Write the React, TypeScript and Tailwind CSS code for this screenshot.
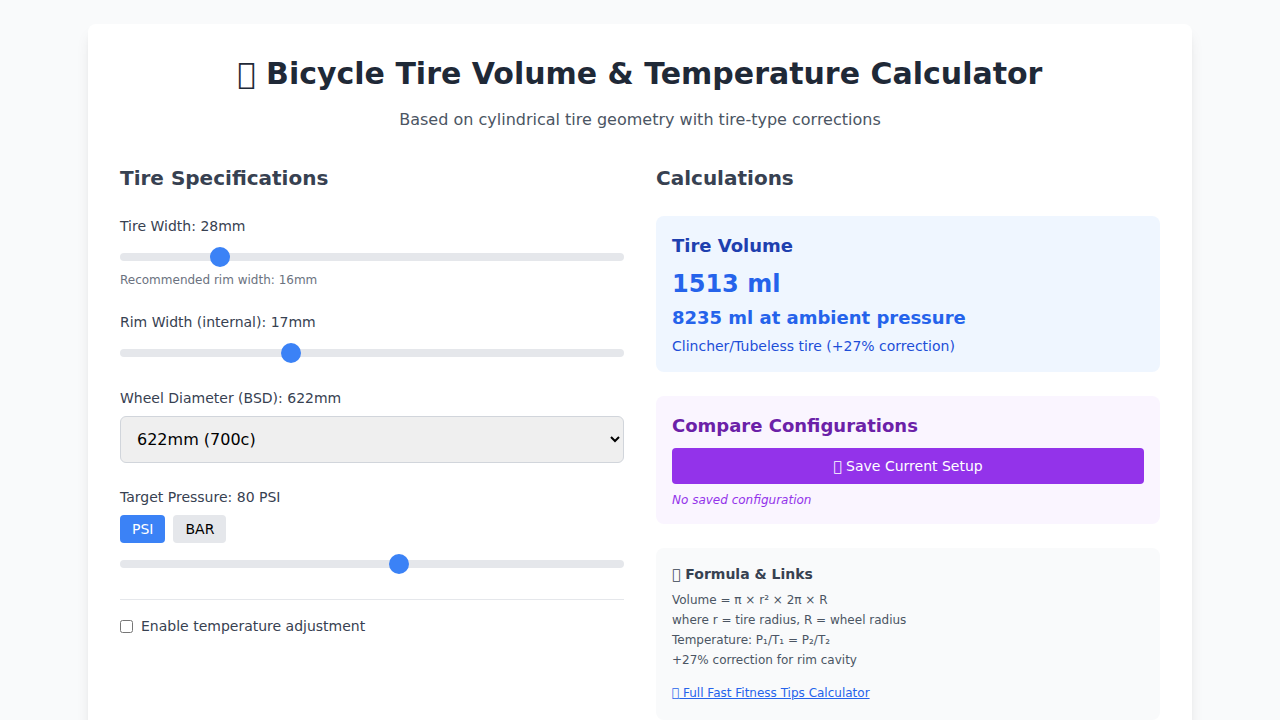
import { useState } from "react";

const sliderClass =
  "h-2 w-full cursor-pointer appearance-none rounded-lg bg-[#e5e7eb] [&::-webkit-slider-thumb]:h-5 [&::-webkit-slider-thumb]:w-5 [&::-webkit-slider-thumb]:appearance-none [&::-webkit-slider-thumb]:rounded-full [&::-webkit-slider-thumb]:bg-[#3b82f6]";

function Slider({ value, min, max, onChange }: { value: number; min: number; max: number; onChange: (v: number) => void }) {
  return (
    <div className="h-6">
      <input type="range" className={sliderClass} min={min} max={max} value={value} onChange={(e) => onChange(Number(e.target.value))} />
    </div>
  );
}

const labelClass = "block text-sm font-medium text-[#374151] mb-2";
const glyph = "\u{F0000}";

export default function App() {
  const [width, setWidth] = useState(28);
  const [rim, setRim] = useState(17);
  const [bsd, setBsd] = useState("622");
  const [unit, setUnit] = useState("PSI");
  const [pressure, setPressure] = useState(80);
  const [temp, setTemp] = useState(false);
  const active = "bg-[#3b82f6] text-white";
  const idle = "bg-[#e5e7eb] text-black";

  return (
    <div className="h-[720px] overflow-hidden bg-[#f9fafb] font-['DejaVu_Sans',sans-serif]">
      <div className="mx-auto mt-6 h-[800px] w-[1104px] rounded-lg bg-white p-8 shadow-lg">
        <h1 className="mb-4 text-center text-3xl leading-9 font-bold text-[#1f2937]">{glyph} Bicycle Tire Volume &amp; Temperature Calculator</h1>
        <p className="mb-8 text-center text-[#4b5563]">Based on cylindrical tire geometry with tire-type corrections</p>
        <div className="grid grid-cols-2 gap-8">
          <section className="space-y-6">
            <h2 className="text-xl font-semibold text-[#374151]">Tire Specifications</h2>
            <div>
              <label className={labelClass}>Tire Width: {width}mm</label>
              <Slider value={width} min={18} max={72} onChange={setWidth} />
              <p className="mt-1 text-xs text-[#6b7280]">Recommended rim width: 16mm</p>
            </div>
            <div>
              <label className={labelClass}>Rim Width (internal): {rim}mm</label>
              <Slider value={rim} min={10} max={31} onChange={setRim} />
            </div>
            <div>
              <label className={labelClass}>Wheel Diameter (BSD): {bsd}mm</label>
              <select value={bsd} onChange={(e) => setBsd(e.target.value)} className="h-[47px] w-full rounded-md border border-[#d1d5db] bg-[#efefef] p-3 text-base text-black">
                <option value="622">622mm (700c)</option>
                <option value="584">584mm (650b)</option>
                <option value="559">559mm (26")</option>
              </select>
            </div>
            <div>
              <label className={labelClass}>Target Pressure: {pressure} {unit}</label>
              <div className="mb-2 flex gap-2">
                {["PSI", "BAR"].map((u) => (
                  <button key={u} onClick={() => setUnit(u)} className={`rounded-sm px-3 py-1 text-sm ${u === unit ? active : idle}`}>{u}</button>
                ))}
              </div>
              <Slider value={pressure} min={15} max={132} onChange={setPressure} />
            </div>
            <div className="border-t border-[#e5e7eb] pt-4">
              <label className="flex items-center gap-2 text-sm font-medium text-[#374151]">
                <input type="checkbox" checked={temp} onChange={(e) => setTemp(e.target.checked)} />
                Enable temperature adjustment
              </label>
            </div>
          </section>

          <section className="space-y-6">
            <h2 className="text-xl font-semibold text-[#374151]">Calculations</h2>
            <div className="rounded-lg bg-[#eff6ff] p-4">
              <h3 className="mb-2 text-lg font-semibold text-[#1e40af]">Tire Volume</h3>
              <p className="text-2xl font-bold text-[#2563eb]">1513 ml</p>
              <p className="mt-1 text-lg font-bold text-[#2563eb]">8235 ml at ambient pressure</p>
              <p className="mt-1 text-sm text-[#1d4ed8]">Clincher/Tubeless tire (+27% correction)</p>
            </div>
            <div className="rounded-lg bg-[#faf5ff] p-4">
              <h3 className="mb-2 text-lg font-semibold text-[#6b21a8]">Compare Configurations</h3>
              <button className="mb-2 w-full rounded-sm bg-[#9333ea] px-4 py-2 text-sm text-white">{glyph} Save Current Setup</button>
              <p className="text-xs text-[#9333ea] italic">No saved configuration</p>
            </div>
            <div className="rounded-lg bg-[#f9fafb] p-4">
              <h4 className="mb-2 text-sm font-semibold text-[#374151]">{glyph} Formula &amp; Links</h4>
              <div className="space-y-1 text-xs text-[#4b5563]">
                <p>Volume = π × r² × 2π × R</p>
                <p>where r = tire radius, R = wheel radius</p>
                <p>Temperature: P₁/T₁ = P₂/T₂</p>
                <p>+27% correction for rim cavity</p>
              </div>
              <div className="mt-3">
                <a href="#" className="text-xs text-[#2563eb] underline">{glyph} Full Fast Fitness Tips Calculator</a>
              </div>
            </div>
          </section>
        </div>
      </div>
    </div>
  );
}
